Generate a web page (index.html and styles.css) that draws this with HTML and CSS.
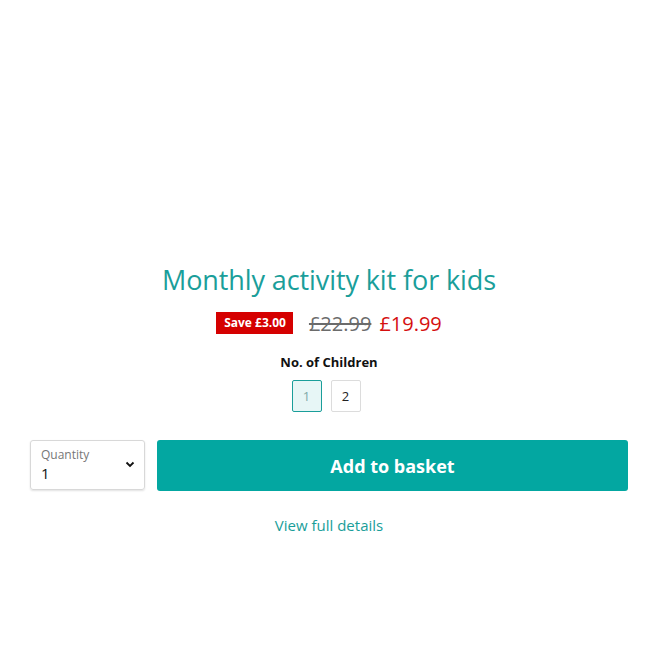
FILE: index.html
```html
<!DOCTYPE html>
<html>
<head>
<meta charset="utf-8">
<link rel="stylesheet" href="styles.css">
</head>
<body>
<div class="page">
  <div class="media"></div>
  <div class="info">
    <h1 class="title">Monthly activity kit for kids</h1>
    <div class="prices">
      <span class="badge">Save £3.00</span>
      <span class="old">£22.99</span>
      <span class="new">£19.99</span>
    </div>
    <div class="option">
      <div class="option-label">No. of Children</div>
      <div class="swatches">
        <span class="swatch selected">1</span>
        <span class="swatch">2</span>
      </div>
    </div>
    <div class="buy">
      <div class="qty">
        <div class="qty-text">
          <span class="qty-label">Quantity</span>
          <span class="qty-value">1</span>
        </div>
        <svg class="chev" width="10" height="7" viewBox="0 0 10 7"><path d="M1.5 1.5 L5 5 L8.5 1.5" fill="none" stroke="#111" stroke-width="1.8"/></svg>
      </div>
      <button class="add">Add to basket</button>
    </div>
    <a class="details" href="#">View full details</a>
  </div>
</div>
</body>
</html>
```
FILE: styles.css
```css
* { box-sizing: border-box; }
html, body { margin: 0; padding: 0; background: #fff; }
body { font-family: "Open Sans", "Noto Sans", sans-serif; }
.page { width: 648px; padding: 0 20px 0 30px; }
.media { height: 262px; }
.info { display: flex; flex-direction: column; align-items: center; }
.title {
  margin: 0;
  font-weight: 400;
  font-size: 27px;
  line-height: 36px;
  color: #1a9e9a;
  letter-spacing: -0.1px;
}
.prices { display: flex; align-items: center; margin-top: 13px; height: 24px; }
.badge {
  background: #d50000;
  color: #fff;
  font-weight: 700;
  font-size: 12px;
  padding: 0 7px 0 8px;
  height: 22px;
  line-height: 22px;
  margin-right: 16px;
}
.old {
  font-size: 20px;
  color: #6b6b6b;
  text-decoration: line-through;
  margin-right: 8px;
}
.new { font-size: 20px; color: #d50f0f; }
.option { display: flex; flex-direction: column; align-items: center; margin-top: 18px; }
.option-label { font-weight: 700; font-size: 13px; color: #111; line-height: 18px; }
.swatches { display: flex; gap: 9px; margin-top: 9px; padding-right: 6px; }
.swatch {
  width: 30px; height: 32px;
  border: 1px solid #dcdcdc;
  border-radius: 2px;
  display: flex; align-items: center; justify-content: center;
  font-size: 13px; color: #222;
}
.swatch.selected { background: #e7f6f6; border-color: #1a9e9a; color: #7fa9a8; }
.buy { display: flex; width: 100%; gap: 12px; margin-top: 28px; }
.qty {
  width: 115px; height: 50px;
  border: 1px solid #d8d8d8;
  border-radius: 3px;
  box-shadow: 0 1px 2px rgba(0,0,0,0.12);
  display: flex; align-items: center; justify-content: space-between;
  padding: 0 9px 0 10px;
}
.qty-text { display: flex; flex-direction: column; }
.qty-label { font-size: 12px; color: #777; line-height: 16px; }
.qty-value { font-size: 15px; color: #111; line-height: 20px; }
.chev { margin-top: -2px; }
.add {
  flex: 1;
  height: 51px;
  border: 0;
  border-radius: 3px;
  background: #03a7a1;
  color: #fff;
  font-family: inherit;
  font-weight: 700;
  font-size: 18px;
  cursor: pointer;
}
.details {
  margin-top: 24px;
  font-size: 15px;
  color: #1a9e9a;
  text-decoration: none;
}
```
